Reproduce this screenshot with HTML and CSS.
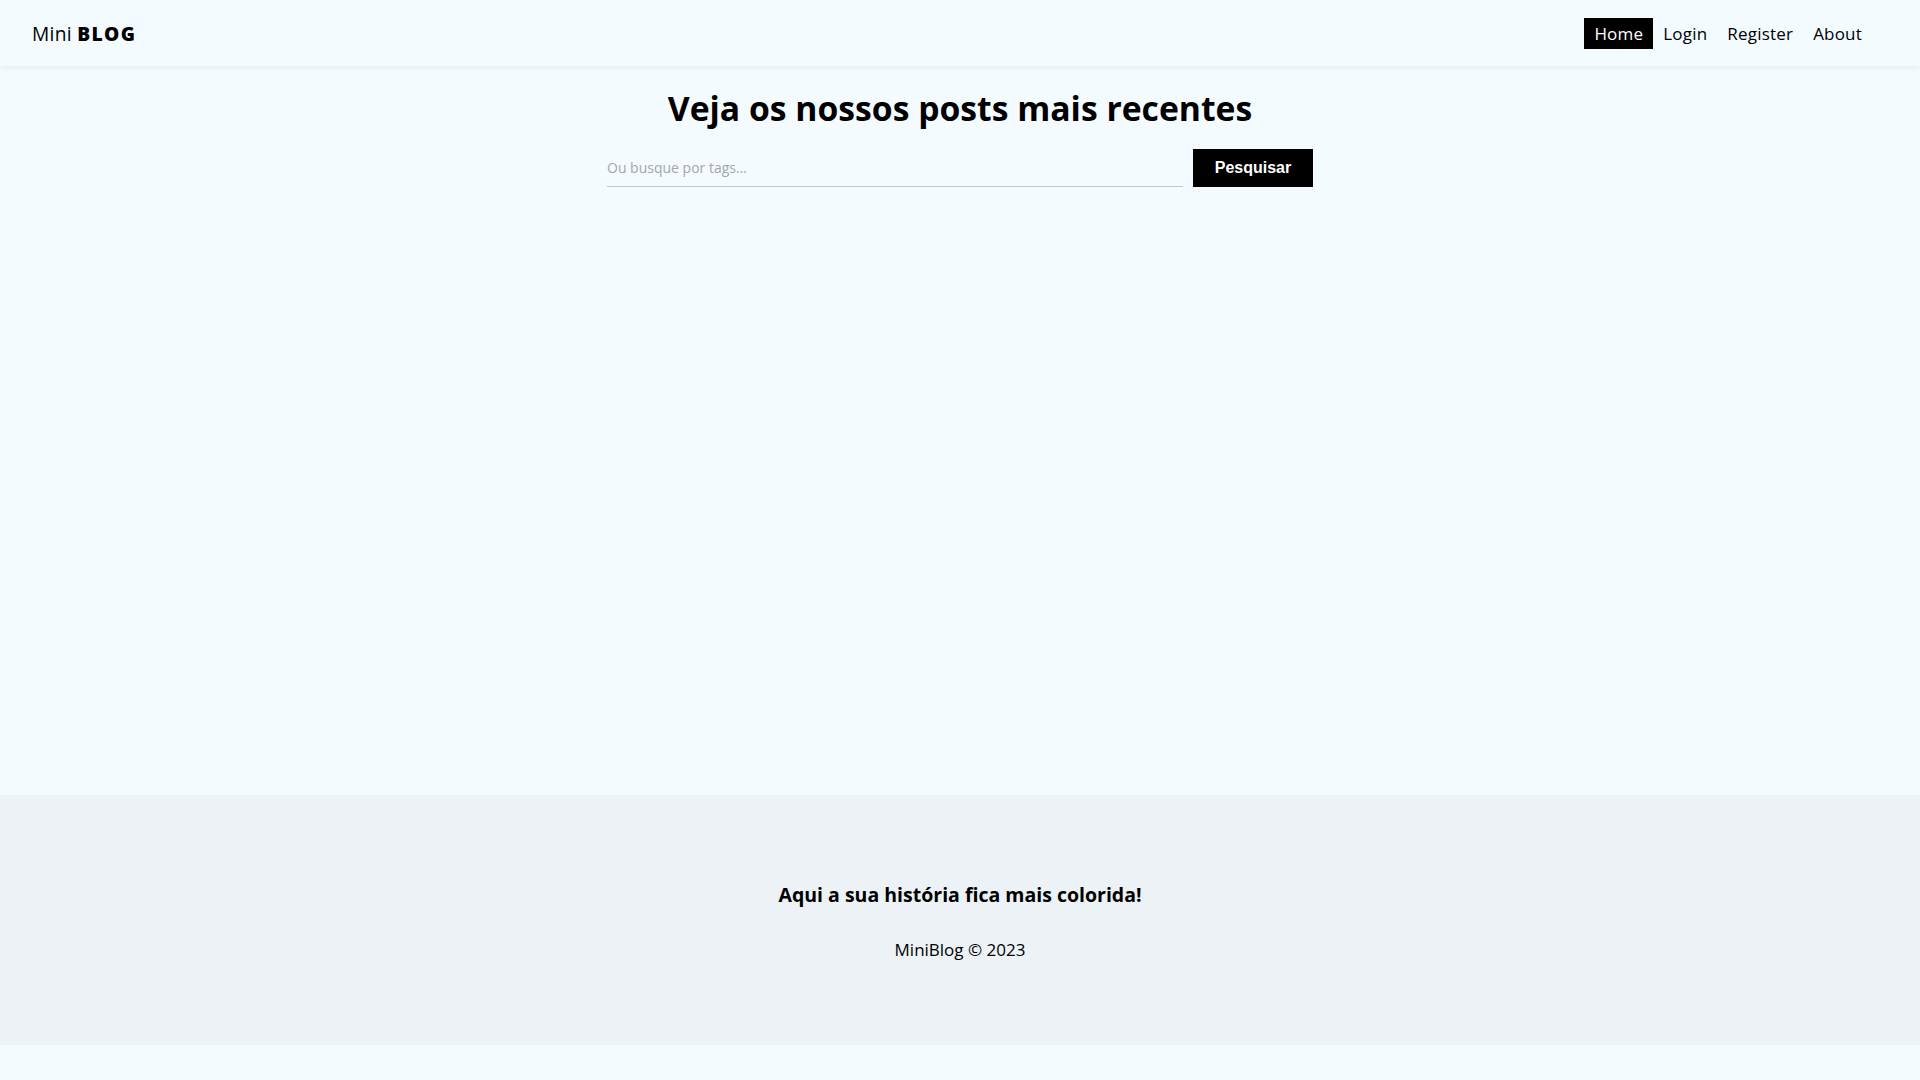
FILE: index.html
```html
<!DOCTYPE html>
<html lang="pt-BR">
<head>
<meta charset="utf-8">
<title>Mini Blog</title>
<link rel="stylesheet" href="styles.css">
</head>
<body>
<header class="navbar">
  <a class="brand" href="#">Mini <span class="brand-strong">BLOG</span></a>
  <nav>
    <ul class="nav-links">
      <li><a class="nav-link active" href="#">Home</a></li>
      <li><a class="nav-link" href="#">Login</a></li>
      <li><a class="nav-link" href="#">Register</a></li>
      <li><a class="nav-link" href="#">About</a></li>
    </ul>
  </nav>
</header>
<main class="home">
  <h1 class="home-title">Veja os nossos posts mais recentes</h1>
  <form class="search-form">
    <input class="search-input" type="text" placeholder="Ou busque por tags...">
    <button class="search-btn" type="button">Pesquisar</button>
  </form>
</main>
<footer class="footer">
  <h3 class="footer-title">Aqui a sua história fica mais colorida!</h3>
  <p class="footer-copy">MiniBlog © 2023</p>
</footer>
</body>
</html>
```
FILE: styles.css
```css
* { box-sizing: border-box; }
html, body { margin: 0; padding: 0; }
body {
  background: #f4fbff;
  font-family: "Open Sans", "DejaVu Sans", sans-serif;
  color: #000;
  min-height: 1080px;
}
.navbar {
  height: 66px;
  display: flex;
  align-items: center;
  justify-content: space-between;
  padding: 0 48px 0 32px;
  background: #f4fbff;
  box-shadow: 0 2px 5px rgba(0, 0, 0, 0.06);
  position: relative;
}
.brand {
  font-size: 19.2px;
  line-height: 26px;
  color: #000;
  text-decoration: none;
  margin-top: 2px;
  letter-spacing: 0.3px;
}
.brand-strong { font-weight: 800; letter-spacing: 1.4px; }
.nav-links {
  display: flex;
  list-style: none;
  margin: 0;
  padding: 0;
}
.nav-link {
  display: block;
  height: 31px;
  line-height: 32px;
  padding: 0 10px;
  font-size: 17px;
  letter-spacing: 0.2px;
  color: #000;
  text-decoration: none;
}
.nav-link.active { background: #000; color: #fff; }
.home {
  min-height: 729px;
  display: flex;
  flex-direction: column;
  align-items: center;
}
.home-title {
  margin: 21px 0 0;
  font-size: 33.7px;
  line-height: 42px;
  font-weight: 700;
}
.search-form {
  margin-top: 20px;
  width: 706px;
  display: flex;
  gap: 10px;
}
.search-input {
  flex: 1;
  height: 38px;
  border: none;
  border-bottom: 1px solid #c8c8c8;
  background: transparent;
  padding: 0;
  font-family: "Open Sans", sans-serif;
  font-size: 14px;
  outline: none;
}
.search-input::placeholder { color: #a6a6a6; }
.search-btn {
  width: 120px;
  height: 38px;
  border: none;
  background: #000;
  color: #fff;
  font-family: "Liberation Sans", Arial, sans-serif;
  font-weight: 700;
  font-size: 16px;
  cursor: pointer;
}
.footer {
  height: 250px;
  background: #ecf2f5;
  display: flex;
  flex-direction: column;
  align-items: center;
  justify-content: center;
  gap: 29px;
  padding-top: 2px;
}
.footer-title {
  margin: 0;
  font-size: 19.5px;
  line-height: 28px;
  font-weight: 700;
}
.footer-copy {
  margin: 0;
  font-size: 17px;
  line-height: 24px;
}
```
